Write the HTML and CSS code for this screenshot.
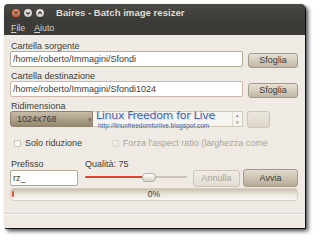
FILE: index.html
```html
<!DOCTYPE html>
<html>
<head>
<meta charset="utf-8">
<link rel="stylesheet" href="styles.css">
</head>
<body>
<div class="window">
  <div class="titlebar">
    <span class="wbtn close"><svg width="8" height="8" viewBox="0 0 8 8"><path d="M2.5 2.5 L5.5 5.5 M5.5 2.5 L2.5 5.5" stroke="#3c3b37" stroke-width="1.2"/></svg></span>
    <span class="wbtn"><svg width="8" height="8" viewBox="0 0 8 8"><path d="M2.3 3.2 L4 5 L5.7 3.2" stroke="#3c3b37" stroke-width="1.3" fill="none"/></svg></span>
    <span class="wbtn"><svg width="8" height="8" viewBox="0 0 8 8"><path d="M2.3 4.8 L4 3 L5.7 4.8" stroke="#3c3b37" stroke-width="1.3" fill="none"/></svg></span>
    <span class="title">Baires - Batch image resizer</span>
  </div>
  <div class="menubar">
    <span class="menu"><u>F</u>ile</span>
    <span class="menu"><u>A</u>iuto</span>
  </div>
  <div class="content">
    <div class="label">Cartella sorgente</div>
    <div class="row">
      <div class="entry path">/home/roberto/Immagini/Sfondi</div>
      <div class="btn browse">Sfoglia</div>
    </div>
    <div class="label gap">Cartella destinazione</div>
    <div class="row">
      <div class="entry path pink">/home/roberto/Immagini/Sfondi1024</div>
      <div class="btn browse">Sfoglia</div>
    </div>
    <div class="label gap">Ridimensiona</div>
    <div class="row">
      <div class="combo">1024x768<span class="arrow">▾</span></div>
      <div class="spin">
        <span class="spin-arrows"><span>▴</span><span>▾</span></span>
        <div class="watermark">
          <div class="wm1">Linux Freedom for Live</div>
          <div class="wm2">http://linuxfreedomforlive.blogspot.com</div>
        </div>
      </div>
      <div class="btn small"></div>
    </div>
    <div class="checks">
      <span class="check first"><span class="box"></span>Solo riduzione</span>
      <span class="check disabled"><span class="box"></span>Forza l'aspect ratio (larghezza come</span>
    </div>
    <div class="labels2">
      <span class="lab-prefix">Prefisso</span>
      <span class="lab-quality">Qualità: 75</span>
    </div>
    <div class="row bottom">
      <div class="entry prefix">rz_</div>
      <div class="slider">
        <span class="track"></span>
        <span class="fill"></span>
        <span class="knob"></span>
      </div>
      <div class="btn cancel">Annulla</div>
      <div class="btn start">Avvia</div>
    </div>
    <div class="progress"><span class="tick"></span>0%</div>
    <div class="sep"></div>
  </div>
</div>
</body>
</html>
```
FILE: styles.css
```css
html, body { margin: 0; padding: 0; background: #ffffff; }
body { width: 320px; height: 243px; overflow: hidden; font-family: "Liberation Sans", Arial, sans-serif; font-size: 9px; color: #3c3b37; }
.window {
  margin: 4px 0 0 4px;
  width: 301px;
  height: 224px;
  background: #efebe4;
  border-radius: 4px 4px 0 0;
  box-shadow: 3px 3px 4px rgba(0,0,0,0.75), 1px 1px 0 #2a2a28;
  display: flex;
  flex-direction: column;
  overflow: hidden;
}
.titlebar {
  height: 16px;
  background: linear-gradient(#4a4944, #3c3b37);
  display: flex;
  align-items: center;
  padding-left: 8px;
  padding-top: 1px;
  box-sizing: border-box;
  gap: 4px;
}
.wbtn {
  width: 8px; height: 8px; border-radius: 50%;
  background: radial-gradient(circle at 50% 35%, #f4f2ee, #b9b5ac);
  display: flex;
}
.wbtn.close { background: radial-gradient(circle at 50% 35%, #f59d76, #d6502a); }
.title { margin-left: 8px; color: #dfdbd2; font-weight: bold; font-size: 9.6px; }
.menubar {
  height: 15px;
  background: #3c3b37;
  display: flex;
  align-items: center;
  padding-left: 7px;
  gap: 9px;
}
.menu { color: #d8d4cb; font-size: 8.8px; }
.content {
  position: relative;
  flex: 1;
  padding: 6px 7px 0 6px;
  display: flex;
  flex-direction: column;
}
.label { height: 10px; line-height: 10px; padding-left: 1px; }
.label.gap { margin-top: 4px; }
.row { display: flex; align-items: center; height: 16px; }
.entry {
  box-sizing: border-box;
  height: 16px;
  background: #ffffff;
  border: 1px solid #b3aa98;
  border-radius: 2px;
  padding-left: 2px;
  line-height: 14px;
  white-space: nowrap;
  overflow: hidden;
}
.entry.path { width: 233px; }
.entry.pink { border-color: #cdb6a9; }
.btn {
  box-sizing: border-box;
  border: 1px solid #a69b88;
  border-radius: 3px;
  background: linear-gradient(#e7e1d6, #c2b7a4);
  text-align: center;
  line-height: 13px;
  height: 15px;
}
.browse { width: 50px; margin-left: 5px; margin-top: 2px; }
.combo {
  position: relative;
  box-sizing: border-box;
  flex: 0 0 83px;
  height: 16px;
  background: linear-gradient(#c9bca6, #95886f);
  border: 1px solid #8f8470;
  border-radius: 3px 0 0 3px;
  padding-left: 6px;
  line-height: 14px;
  color: #3a3834;
}
.arrow { position: absolute; right: 0; top: 1px; font-size: 7px; color: #6f6556; }
.spin {
  position: relative;
  box-sizing: border-box;
  flex: 0 0 150px;
  height: 16px;
  background: #f7f5f1;
  border: 1px solid #cfc7b8;
  border-left: none;
  display: flex;
  justify-content: flex-end;
}
.spin-arrows {
  width: 9px;
  display: flex; flex-direction: column;
  font-size: 5px; line-height: 7px; color: #8b8477; text-align: center;
  border-left: 1px solid #e0dbd1;
}
.btn.small { flex: 0 0 23px; height: 17px; margin-left: 4px; background: linear-gradient(#ebe6dd, #ddd6c9); border-color: #cdc5b6; }
.checks { display: flex; align-items: center; height: 16px; margin-top: 8px; }
.check { display: flex; align-items: center; white-space: nowrap; }
.check.first { width: 98px; }
.check .box {
  box-sizing: border-box; width: 7px; height: 7px;
  background: #fbfaf8; border: 1px solid #c9c1b1; border-radius: 1px;
  margin: 0 4px 0 4px;
}
.check.disabled { color: #aaa498; }
.check.disabled .box { border-color: #ddd7cc; background: #eeebe5; }
.labels2 { display: flex; height: 10px; line-height: 10px; margin-top: 8px; }
.lab-prefix { width: 74px; padding-left: 1px; }
.row.bottom { height: 18px; }
.entry.prefix { flex: 0 0 68px; }
.slider { position: relative; flex: 0 0 110px; height: 18px; margin-left: 5px; }
.track { position: absolute; left: 2px; right: 6px; top: 7px; height: 2px; background: #cbc4b7; border-radius: 1px; }
.fill { position: absolute; left: 2px; width: 58px; top: 7px; height: 2px; background: #d9452f; border-radius: 1px; }
.knob { position: absolute; left: 59px; top: 4px; width: 12px; height: 7px; border-radius: 4px; background: linear-gradient(#ffffff, #d8d2c8); border: 1px solid #b5ad9f; }
.btn.cancel { flex: 0 0 47px; height: 17px; line-height: 15px; color: #aaa498; background: linear-gradient(#f0ece5, #e2ddd3); border-color: #cdc6b8; }
.btn.start { flex: 0 0 55px; height: 18px; line-height: 16px; margin-left: 3px; background: linear-gradient(#e2dbcd, #b7ab96); }
.progress {
  position: relative;
  box-sizing: border-box;
  margin-top: 1px;
  width: 288px; height: 13px;
  border-radius: 4px;
  background: linear-gradient(#c9bfad, #e9e4db 45%, #fbfaf7);
  border: 1px solid #d5cdbf;
  text-align: center;
  line-height: 11px;
  font-size: 8.5px;
}
.tick { position: absolute; left: 1px; top: 2px; width: 2px; height: 6px; background: #e0553a; border-radius: 1px; }
.sep { margin-top: 12px; margin-left: -6px; margin-right: -7px; height: 1px; background: #d9d3c8; border-bottom: 1px solid #fbfaf7; }
.watermark { position: absolute; left: 3px; top: -2px; pointer-events: none; white-space: nowrap; }
.wm1 { font-family: "DejaVu Sans", sans-serif; font-size: 11px; color: #3f62a3; letter-spacing: -0.3px; text-shadow: 0 0 2px #fff, 0 0 1px #fff, 1px 1px 1px rgba(63,98,163,0.35); line-height: 12px; }
.wm2 { font-size: 6.5px; color: #3f62a3; margin-left: 2px; line-height: 7px; }
```
